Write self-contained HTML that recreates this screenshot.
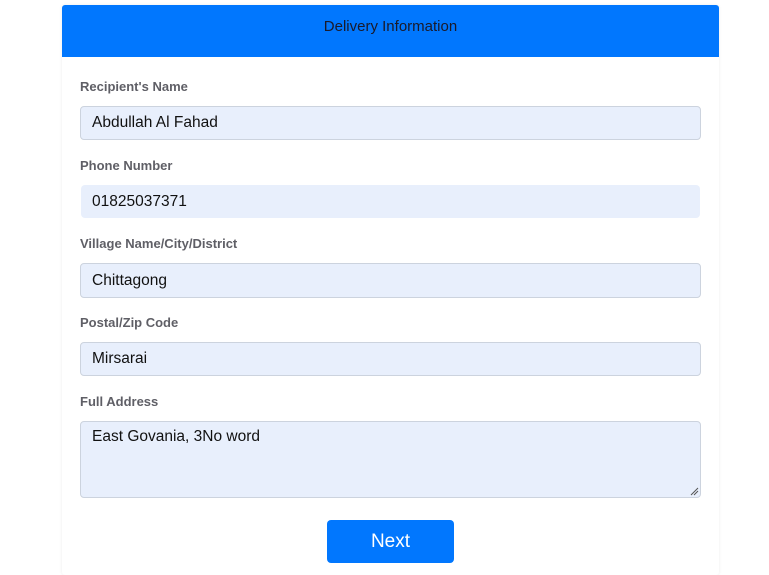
<!DOCTYPE html>
<html><head><style>
body{margin:0;background:#fff;font-family:"Liberation Sans",sans-serif;}
.card{position:absolute;left:62px;top:5px;width:657px;height:570px;background:#fff;border-radius:3px;box-shadow:0 0 3px rgba(0,0,0,0.08);}
.hd{height:52px;background:#0177fe;border-radius:3px 3px 0 0;color:#1a1a2a;font-size:15px;text-align:center;line-height:44px;}
.lbl{position:absolute;left:18px;font-size:13px;font-weight:bold;color:#5f5f66;}
.in{position:absolute;left:18px;width:621px;background:#e8effc;border:1px solid #ccd3de;border-radius:4px;box-sizing:border-box;font-size:15.5px;color:#111;padding-left:11px;}
.btn{position:absolute;left:265px;top:515px;width:127px;height:43px;background:#0177fe;border-radius:4px;color:#fff;font-size:19px;text-align:center;line-height:43px;}
</style></head><body>
<div class="card">
<div class="hd">Delivery Information</div>
<div class="lbl" style="top:74px">Recipient's Name</div>
<div class="in" style="top:101px;height:34px;line-height:32px">Abdullah Al Fahad</div>
<div class="lbl" style="top:153px">Phone Number</div>
<div class="in" style="top:180px;height:33px;line-height:33px;border:none;left:19px;width:619px">01825037371</div>
<div class="lbl" style="top:231px">Village Name/City/District</div>
<div class="in" style="top:258px;height:35px;line-height:33px">Chittagong</div>
<div class="lbl" style="top:310px">Postal/Zip Code</div>
<div class="in" style="top:337px;height:34px;line-height:32px">Mirsarai</div>
<div class="lbl" style="top:389px">Full Address</div>
<div class="in" style="top:416px;height:77px;line-height:30px">East Govania, 3No word
<svg style="position:absolute;right:1px;bottom:1px" width="9" height="9"><path d="M8 1L1 8M8 4L4 8" stroke="#555" stroke-width="1"/></svg></div>
<div class="btn">Next</div>
</div>
</body></html>
